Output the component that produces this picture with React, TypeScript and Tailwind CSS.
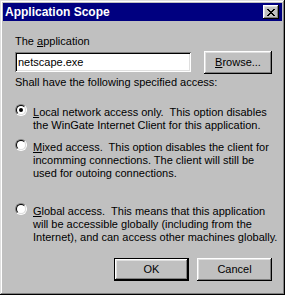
const raised =
  "shadow-[inset_-1px_-1px_#000,inset_1px_1px_#fff,inset_-2px_-2px_#808080,inset_2px_2px_#dfdfdf]";

function Radio({ checked }: { checked?: boolean }) {
  return (
    <div className="w-[12px] h-[12px] shrink-0 rounded-full border border-t-[#808080] border-l-[#808080] border-b-white border-r-white">
      <div className="w-full h-full rounded-full border border-t-black border-l-black border-b-[#dfdfdf] border-r-[#dfdfdf] bg-white flex items-center justify-center">
        {checked && <div className="w-[4px] h-[4px] rounded-full bg-black" />}
      </div>
    </div>
  );
}

function Option({
  checked,
  lines,
  className,
}: {
  checked?: boolean;
  lines: React.ReactNode[];
  className?: string;
}) {
  return (
    <div className={"flex gap-[6px] " + (className ?? "")}>
      <div className="mt-[-2px]">
        <Radio checked={checked} />
      </div>
      <div className="whitespace-pre">
        {lines.map((l, i) => (
          <div key={i}>{l}</div>
        ))}
      </div>
    </div>
  );
}

function Button({
  children,
  isDefault,
  className,
}: {
  children: React.ReactNode;
  isDefault?: boolean;
  className?: string;
}) {
  return (
    <div
      className={
        "h-[23px] bg-[#c0c0c0] " +
        (isDefault ? "border border-black " : "") +
        (className ?? "")
      }
    >
      <div className={"w-full h-full flex items-center justify-center " + raised}>
        {children}
      </div>
    </div>
  );
}

export default function App() {
  return (
    <div
      className="w-[285px] h-[295px] bg-[#c0c0c0] p-[3px] text-black text-[11px] leading-[13px] shadow-[inset_-1px_-1px_#000,inset_1px_1px_#dfdfdf,inset_-2px_-2px_#808080,inset_2px_2px_#fff]"
      style={{ fontFamily: '"Liberation Sans", Arial, sans-serif' }}
    >
      <div className="h-[18px] bg-[#000080] flex items-center justify-between pl-[2px] pr-[3px]">
        <span className="text-white font-bold text-[12px]">Application Scope</span>
        <div className={"w-[16px] h-[14px] bg-[#c0c0c0] flex items-center justify-center " + raised}>
          <svg width="8" height="7" viewBox="0 0 8 7" shapeRendering="crispEdges">
            <path
              d="M0 0h2v1h-2zM6 0h2v1h-2zM1 1h2v1h-2zM5 1h2v1h-2zM2 2h4v1h-4zM3 3h2v1h-2zM2 4h4v1h-4zM1 5h2v1h-2zM5 5h2v1h-2zM0 6h2v1h-2zM6 6h2v1h-2z"
              fill="#000"
            />
          </svg>
        </div>
      </div>

      <div className="pl-[12px] pr-[10px]">
        <div className="mt-[14px]">
          The <span className="underline">a</span>pplication
        </div>
        <div className="flex items-center justify-between mt-[3px] h-[22px]">
          <div className="w-[176px] h-[20px] shadow-[inset_1px_1px_#808080,inset_-1px_-1px_#fff,inset_2px_2px_#000,inset_-2px_-2px_#dfdfdf] bg-white flex items-center pl-[3px]">
            netscape.exe
          </div>
          <Button className="w-[68px] h-[22px]">
            <span>
              <span className="underline">B</span>rowse...
            </span>
          </Button>
        </div>
        <div className="mt-[3px]">Shall have the following specified access:</div>

        <Option
          checked
          className="mt-[17px]"
          lines={[
            <>
              <span className="underline">L</span>ocal network access only.  This option disables
            </>,
            "the WinGate Internet Client for this application.",
          ]}
        />
        <Option
          className="mt-[9px]"
          lines={[
            <>
              <span className="underline">M</span>ixed access.  This option disables the client for
            </>,
            "incomming connections. The client will still be",
            "used for outoing connections.",
          ]}
        />
        <Option
          className="mt-[25px]"
          lines={[
            <>
              <span className="underline">G</span>lobal access.  This means that this application
            </>,
            "will be accessible globally (including from the",
            "Internet), and can access other machines globally.",
          ]}
        />

        <div className="flex justify-end gap-[8px] mt-[14px]">
          <Button isDefault className="w-[75px]">
            OK
          </Button>
          <Button className="w-[75px]">Cancel</Button>
        </div>
      </div>
    </div>
  );
}
